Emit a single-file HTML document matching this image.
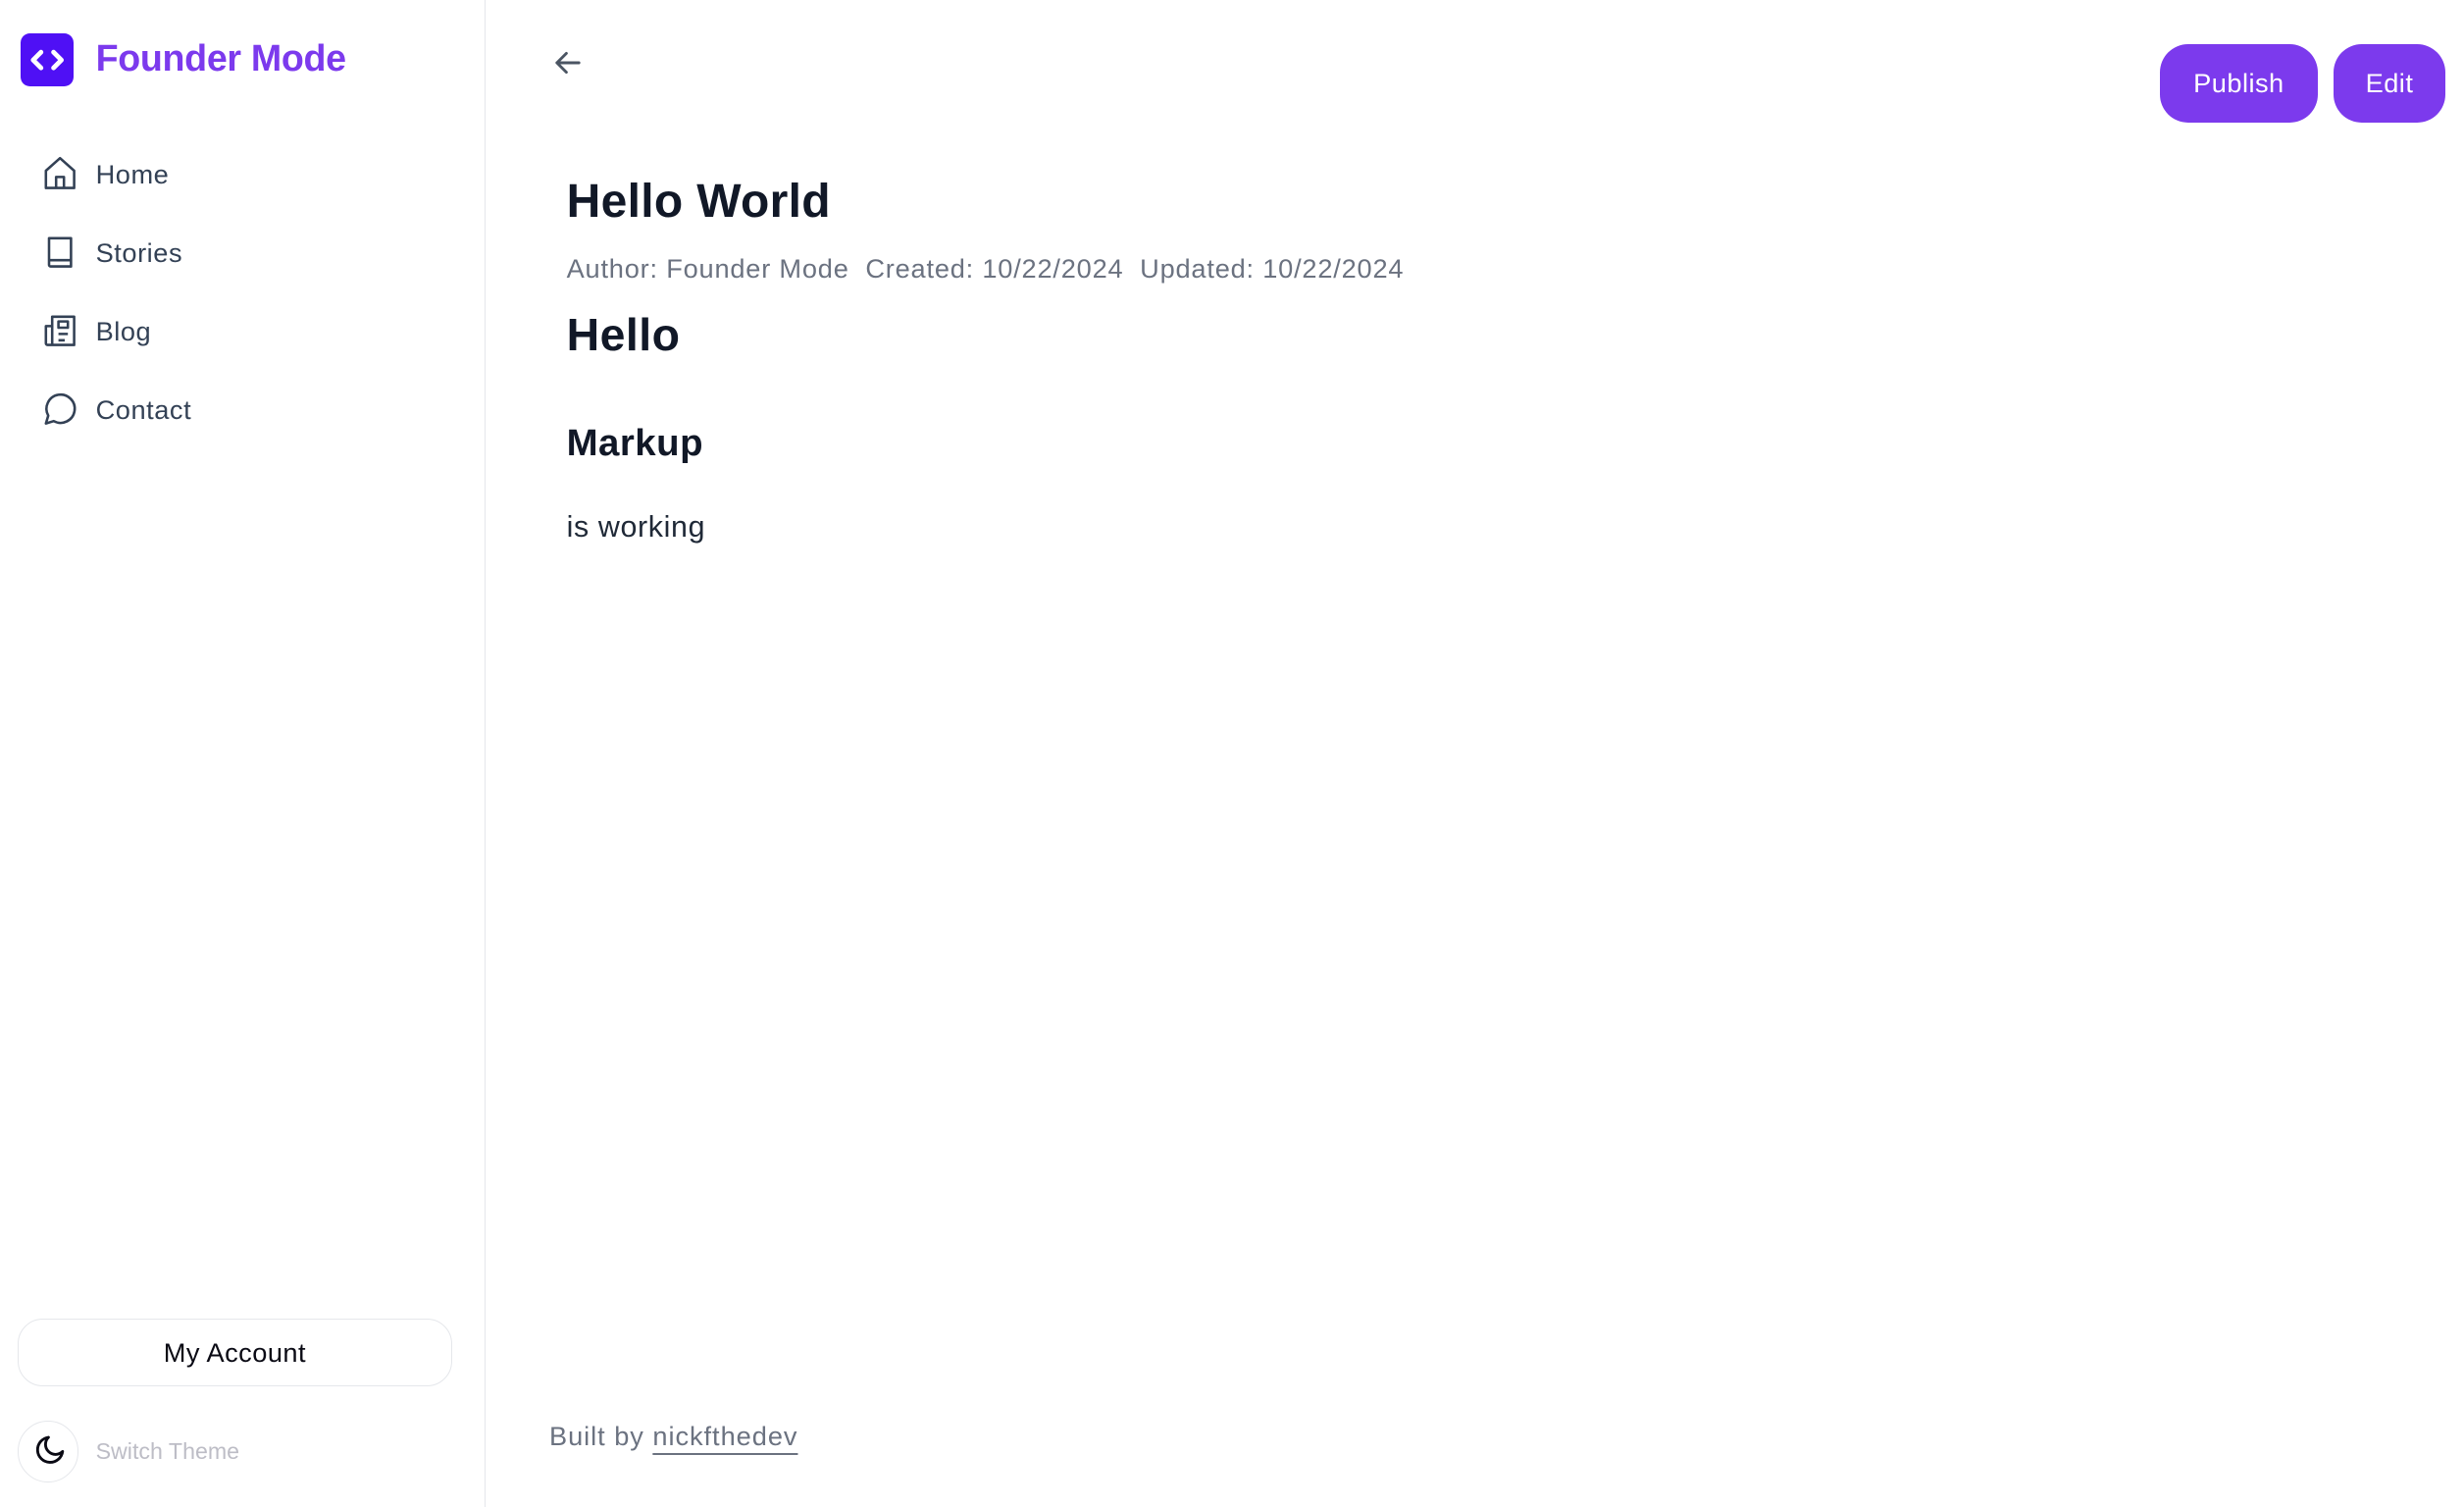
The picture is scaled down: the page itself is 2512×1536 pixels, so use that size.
<!DOCTYPE html>
<html><head><meta charset="utf-8"><style>
html,body{margin:0;padding:0;background:#fff}
body{zoom:1.6;width:1570px;height:960px;position:relative;overflow:hidden;font-family:"Liberation Sans",sans-serif;color:#111827}
.side{position:absolute;left:0;top:0;width:309px;height:960px;border-right:1px solid #e5e7eb}
.logo{position:absolute;left:13px;top:21px;width:34px;height:34px;border-radius:6px;background:#4f10f5}
.brand{position:absolute;left:61px;top:24px;font-size:23.5px;font-weight:bold;color:#7c3aed;letter-spacing:-0.2px}
.nav{position:absolute;left:26px;height:24px;display:flex;align-items:center;font-size:17px;color:#334155;letter-spacing:0.35px}
.nav svg{width:24px;height:24px;margin-right:11px}
.acct{position:absolute;left:11px;top:840px;width:276px;height:42px;border:1px solid #e5e7eb;border-radius:16px;text-align:center;line-height:42px;font-size:17px;color:#0a0a14;letter-spacing:0.3px}
.theme{position:absolute;left:11px;top:905px;width:38px;height:38px;border:1px solid #e5e7eb;border-radius:50%}
.tt{position:absolute;left:61px;top:916px;font-size:14.5px;color:#bdbdc6}
.btn{position:absolute;top:28px;height:50px;line-height:50px;background:#7c3aed;color:#fff;border-radius:18px;font-size:17px;text-align:center;letter-spacing:0.3px}
.main{position:absolute;left:361px}
</style></head><body>
<div class="side">
<div class="logo"><svg width="34" height="34" viewBox="0 0 34 34"><path d="M13 12l-5 5 5 5M21 12l5 5-5 5" stroke="#fff" stroke-width="3" fill="none" stroke-linecap="round" stroke-linejoin="round"/></svg></div>
<div class="brand">Founder Mode</div>
<div class="nav" style="top:99px"><svg viewBox="0 0 24 24" fill="none" stroke="#334155" stroke-width="1.6" stroke-linejoin="round"><path d="M3 10l9-8 9 8v11H3z"/><path d="M9.5 21v-7h5v7"/></svg>Home</div>
<div class="nav" style="top:149px"><svg viewBox="0 0 24 24" fill="none" stroke="#334155" stroke-width="1.6" stroke-linejoin="round"><path d="M5 3h14v18H6a1 1 0 0 1-1-1z"/><path d="M5 17h14"/></svg>Stories</div>
<div class="nav" style="top:199px"><svg viewBox="0 0 24 24" fill="none" stroke="#334155" stroke-width="1.6" stroke-linejoin="round"><path d="M7 3h14v18H4a1 1 0 0 1-1-1V9h4z"/><path d="M7 9v12"/><rect x="11" y="6" width="6" height="4"/><path d="M11 14h6M11 18h4"/></svg>Blog</div>
<div class="nav" style="top:249px"><svg viewBox="0 0 24 24" fill="none" stroke="#334155" stroke-width="1.6" stroke-linejoin="round"><path d="M3 21l1.5-5A9 9 0 1 1 8 19.5z"/></svg>Contact</div>
<div class="acct">My Account</div>
<div class="theme"><svg width="38" height="38" viewBox="0 0 38 38"><path d="M19 10a8 8 0 1 0 9 9 6 6 0 0 1-9-9z" fill="none" stroke="#0a0a14" stroke-width="1.8" stroke-linejoin="round"/></svg></div>
<div class="tt">Switch Theme</div>
</div>
<svg style="position:absolute;left:352px;top:30px" width="20" height="20" viewBox="0 0 20 20"><path d="M17 10H3M9 4l-6 6 6 6" fill="none" stroke="#4b5563" stroke-width="1.8" stroke-linecap="round" stroke-linejoin="round"/></svg>
<div class="btn" style="left:1376px;width:101px">Publish</div>
<div class="btn" style="left:1487px;width:71px">Edit</div>
<div class="main" style="top:111px;font-size:30px;font-weight:bold;letter-spacing:0.2px">Hello World</div>
<div class="main" style="top:161px;font-size:17px;color:#6b7280;letter-spacing:0.5px">Author: Founder Mode&nbsp; Created: 10/22/2024&nbsp; Updated: 10/22/2024</div>
<div class="main" style="top:196px;font-size:29px;font-weight:bold;letter-spacing:0.3px">Hello</div>
<div class="main" style="top:269px;font-size:24px;font-weight:bold;letter-spacing:0.3px">Markup</div>
<div class="main" style="top:325px;font-size:19px;color:#1f2937;letter-spacing:0.4px">is working</div>
<div style="position:absolute;left:350px;top:905px;font-size:17px;color:#6b7280;letter-spacing:0.6px">Built by <span style="text-decoration:underline;text-underline-offset:5px">nickfthedev</span></div>
</body></html>
